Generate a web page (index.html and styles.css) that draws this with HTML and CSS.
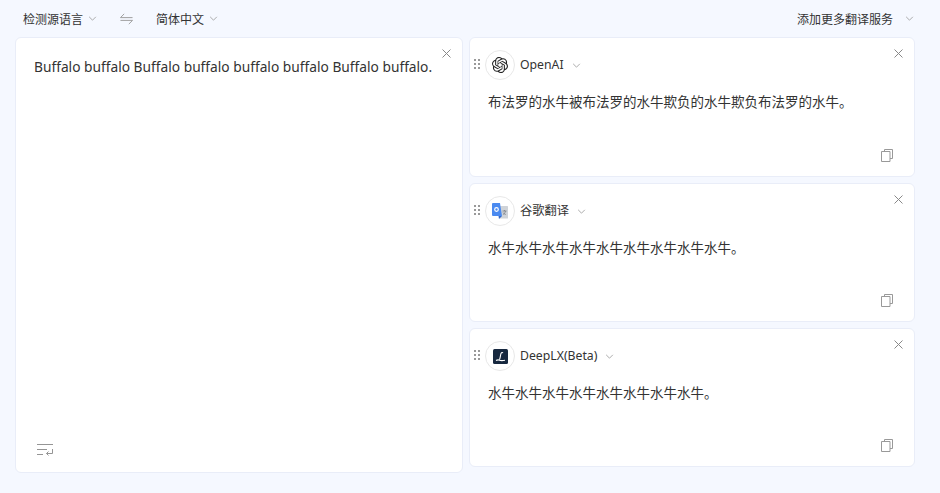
FILE: index.html
```html
<!DOCTYPE html>
<html lang="zh-CN">
<head>
<meta charset="utf-8">
<title>翻译</title>
<link rel="stylesheet" href="styles.css">
</head>
<body>
<div class="app">
  <header class="topbar">
    <div class="lang lang-source"><span>检测源语言</span><svg class="chev" viewBox="0 0 10 6"><path d="M1 1l4 4 4-4"/></svg></div>
    <svg class="swap" viewBox="0 0 14 12"><path d="M.5 4.500h13M.5 4.500l4-4M13.500 7.500H.5M13.500 7.500l-4 4"/></svg>
    <div class="lang lang-target"><span>简体中文</span><svg class="chev" viewBox="0 0 10 6"><path d="M1 1l4 4 4-4"/></svg></div>
    <div class="add"><span>添加更多翻译服务</span><svg class="chev" viewBox="0 0 10 6"><path d="M1 1l4 4 4-4"/></svg></div>
  </header>
  <main class="main">
    <section class="card source">
      <svg class="close" viewBox="0 0 9 9"><path d="M.5.5l8 8M8.500.5l-8 8"/></svg>
      <p class="source-text">Buffalo buffalo Buffalo buffalo buffalo buffalo Buffalo buffalo.</p>
      <svg class="wrap-icon" viewBox="0 0 16 13"><path d="M0 1.500h16M0 6.500h10M0 11.500h6M15.500 6v4.500h-6M11.500 8.500l-2 2 2 2"/></svg>
    </section>
    <div class="results">
      <section class="card result first">
        <svg class="close" viewBox="0 0 9 9"><path d="M.5.5l8 8M8.500.5l-8 8"/></svg>
        <div class="head">
          <svg class="grip" viewBox="0 0 6 10"><path d="M0 0h2v2H0zM4 0h2v2H4zM0 4h2v2H0zM4 4h2v2H4zM0 8h2v2H0zM4 8h2v2H4z"/></svg>
          <span class="logo"><svg class="logo-openai" viewBox="0 0 24 24"><path d="M22.2819 9.8211a5.9847 5.9847 0 0 0-.5157-4.9108 6.0462 6.0462 0 0 0-6.5098-2.9A6.0651 6.0651 0 0 0 4.9807 4.1818a5.9847 5.9847 0 0 0-3.9977 2.9 6.0462 6.0462 0 0 0 .7427 7.0966 5.98 5.98 0 0 0 .511 4.9107 6.051 6.051 0 0 0 6.5146 2.9001A5.9847 5.9847 0 0 0 13.2599 24a6.0557 6.0557 0 0 0 5.7718-4.2058 5.9894 5.9894 0 0 0 3.9977-2.9001 6.0557 6.0557 0 0 0-.7475-7.0729zm-9.022 12.6081a4.4755 4.4755 0 0 1-2.8764-1.0408l.1419-.0804 4.7783-2.7582a.7948.7948 0 0 0 .3927-.6813v-6.7369l2.02 1.1686a.071.071 0 0 1 .038.052v5.5826a4.504 4.504 0 0 1-4.4945 4.4944zm-9.6607-4.1254a4.4708 4.4708 0 0 1-.5346-3.0137l.142.0852 4.783 2.7582a.7712.7712 0 0 0 .7806 0l5.8428-3.3685v2.3324a.0804.0804 0 0 1-.0332.0615L9.74 19.9502a4.4992 4.4992 0 0 1-6.1408-1.6464zM2.3408 7.8956a4.485 4.485 0 0 1 2.3655-1.9728V11.6a.7664.7664 0 0 0 .3879.6765l5.8144 3.3543-2.0201 1.1685a.0757.0757 0 0 1-.071 0l-4.8303-2.7865A4.504 4.504 0 0 1 2.3408 7.872zm16.5963 3.8558L13.1038 8.364 15.1192 7.2a.0757.0757 0 0 1 .071 0l4.8303 2.7913a4.4944 4.4944 0 0 1-.6765 8.1042v-5.6772a.79.79 0 0 0-.407-.667zm2.0107-3.0231l-.142-.0852-4.7735-2.7818a.7759.7759 0 0 0-.7854 0L9.409 9.2297V6.8974a.0662.0662 0 0 1 .0284-.0615l4.8303-2.7866a4.4992 4.4992 0 0 1 6.6802 4.66zM8.3065 12.863l-2.02-1.1638a.0804.0804 0 0 1-.038-.0567V6.0742a4.4992 4.4992 0 0 1 7.3757-3.4537l-.142.0805L8.704 5.459a.7948.7948 0 0 0-.3927.6813zm1.0976-2.3654l2.602-1.4998 2.6069 1.4998v2.9994l-2.5974 1.4997-2.6067-1.4997Z"/></svg></span>
          <span class="name">OpenAI</span>
          <svg class="chev" viewBox="0 0 10 6"><path d="M1 1l4 4 4-4"/></svg>
        </div>
        <p class="output">布法罗的水牛被布法罗的水牛欺负的水牛欺负布法罗的水牛。</p>
        <svg class="copy" viewBox="0 0 12 13"><path d="M3.500 2.500V.5h8v9H9M.5 2.500h8.500v10H.5z"/></svg>
      </section>
      <section class="card result">
        <svg class="close" viewBox="0 0 9 9"><path d="M.5.5l8 8M8.500.5l-8 8"/></svg>
        <div class="head">
          <svg class="grip" viewBox="0 0 6 10"><path d="M0 0h2v2H0zM4 0h2v2H4zM0 4h2v2H0zM4 4h2v2H4zM0 8h2v2H0zM4 8h2v2H4z"/></svg>
          <span class="logo"><svg class="logo-google" viewBox="0 0 16 16"><path class="g-gray" d="M7 3h8.500a.5.500 0 0 1 .5.500V15a.5.500 0 0 1-.5.500H8z"/><path class="g-blue" d="M1 0h7l2 13H1a1 1 0 0 1-1-1V1a1 1 0 0 1 1-1z"/><path class="g-dark" d="M6.500 13H10l-3 3z"/><circle class="g-white" cx="4.500" cy="6.500" r="1.800"/><path class="g-mark" d="M10.500 8h4M12.500 7v1M13.500 8c-.4 2-1.300 3-2.600 3.500M11 9.500c.5 1 1.400 1.700 2.800 2"/></svg></span>
          <span class="name">谷歌翻译</span>
          <svg class="chev" viewBox="0 0 10 6"><path d="M1 1l4 4 4-4"/></svg>
        </div>
        <p class="output">水牛水牛水牛水牛水牛水牛水牛水牛水牛。</p>
        <svg class="copy" viewBox="0 0 12 13"><path d="M3.500 2.500V.5h8v9H9M.5 2.500h8.500v10H.5z"/></svg>
      </section>
      <section class="card result">
        <svg class="close" viewBox="0 0 9 9"><path d="M.5.5l8 8M8.500.5l-8 8"/></svg>
        <div class="head">
          <svg class="grip" viewBox="0 0 6 10"><path d="M0 0h2v2H0zM4 0h2v2H4zM0 4h2v2H0zM4 4h2v2H4zM0 8h2v2H0zM4 8h2v2H4z"/></svg>
          <span class="logo"><svg class="logo-deepl" viewBox="0 0 15 15"><rect width="15" height="15" rx="1.500"/><path d="M3 11.500c1.500-.8 2.500-.8 3.500-.3s2.500.6 5.500.1M6.500 10.500c1-2 .8-4.500 1.600-6.200.5-1 1.600-1 1.700-.2"/></svg></span>
          <span class="name">DeepLX(Beta)</span>
          <svg class="chev" viewBox="0 0 10 6"><path d="M1 1l4 4 4-4"/></svg>
        </div>
        <p class="output">水牛水牛水牛水牛水牛水牛水牛水牛。</p>
        <svg class="copy" viewBox="0 0 12 13"><path d="M3.500 2.500V.5h8v9H9M.5 2.500h8.500v10H.5z"/></svg>
      </section>
    </div>
  </main>
</div>
</body>
</html>
```
FILE: styles.css
```css
* { box-sizing: border-box; }
html, body { margin: 0; padding: 0; }
body {
  width: 940px;
  height: 493px;
  overflow: hidden;
  background: #f5f8ff;
  color: #333;
  font-family: "Noto Sans", "Noto Sans CJK SC", sans-serif;
  font-size: 14px;
}
svg { display: block; flex: none; }
.topbar {
  height: 37px;
  display: flex;
  align-items: center;
  padding: 0 26px 0 23px;
  font-size: 12px;
  font-family: "Noto Sans CJK SC", sans-serif;
}
.lang, .add { display: flex; align-items: center; }
.chev {
  width: 9px;
  height: 5px;
  fill: none;
  stroke: #9a9a9a;
  stroke-width: 1;
  margin-left: 5px;
}
.swap {
  width: 13px;
  height: 12px;
  margin: 0 23px;
  fill: none;
  stroke: #999;
  stroke-width: 1;
}
.add { margin-left: auto; }
.add .chev { margin-left: 12px; }
.main {
  display: flex;
  gap: 6px;
  padding-left: 15px;
}
.card {
  position: relative;
  background: #fff;
  border: 1px solid #e9edf8;
  border-radius: 6px;
}
.source {
  width: 448px;
  height: 436px;
  padding: 19px 18px 0;
}
.source-text {
  margin: 0;
  font-size: 13.75px;
  line-height: 20px;
  white-space: nowrap;
  color: #333;
}
.close {
  position: absolute;
  top: 11px;
  right: 11px;
  width: 9px;
  height: 9px;
  fill: none;
  stroke: #888;
  stroke-width: 1;
}
.wrap-icon {
  position: absolute;
  left: 21px;
  bottom: 16px;
  width: 16px;
  height: 13px;
  fill: none;
  stroke: #959595;
  stroke-width: 1;
}
.results {
  width: 446px;
  display: flex;
  flex-direction: column;
  gap: 6px;
}
.result {
  height: 139px;
  padding: 12px 18px 0 4px;
}
.result.first { height: 140px; }
.head {
  display: flex;
  align-items: center;
  height: 30px;
}
.grip {
  width: 6px;
  height: 10px;
  fill: #999;
  margin: 0 5px 2px 0;
}
.logo {
  width: 30px;
  height: 30px;
  border: 1px solid #e8e8e8;
  border-radius: 50%;
  display: flex;
  align-items: center;
  justify-content: center;
  background: #fff;
  flex: none;
}
.logo-openai { width: 16px; height: 16px; fill: #222; }
.logo-google { width: 16px; height: 16px; }
.g-gray { fill: #cfd3d8; }
.g-blue { fill: #4a8af0; }
.g-dark { fill: #3367c8; }
.g-white { fill: none; stroke: #fff; stroke-width: 1.2; }
.g-mark { fill: none; stroke: #7b7f85; stroke-width: .8; }
.logo-deepl { width: 15px; height: 15px; }
.logo-deepl rect { fill: #17283f; }
.logo-deepl path { fill: none; stroke: #fff; stroke-width: 1.1; }
.name {
  margin: 0 0 2px 5px;
  font-size: 12.25px;
  font-family: "Noto Sans", "Noto Sans CJK SC", sans-serif;
}
.head .chev { margin-left: 8px; }
.output {
  margin: 11px 0 0 14px;
  font-size: 13.5px;
  line-height: 20px;
  white-space: nowrap;
  font-family: "Noto Sans CJK SC", sans-serif;
  color: #333;
}
.copy {
  position: absolute;
  right: 21px;
  bottom: 14px;
  width: 12px;
  height: 13px;
  fill: none;
  stroke: #999;
  stroke-width: 1;
}
```
